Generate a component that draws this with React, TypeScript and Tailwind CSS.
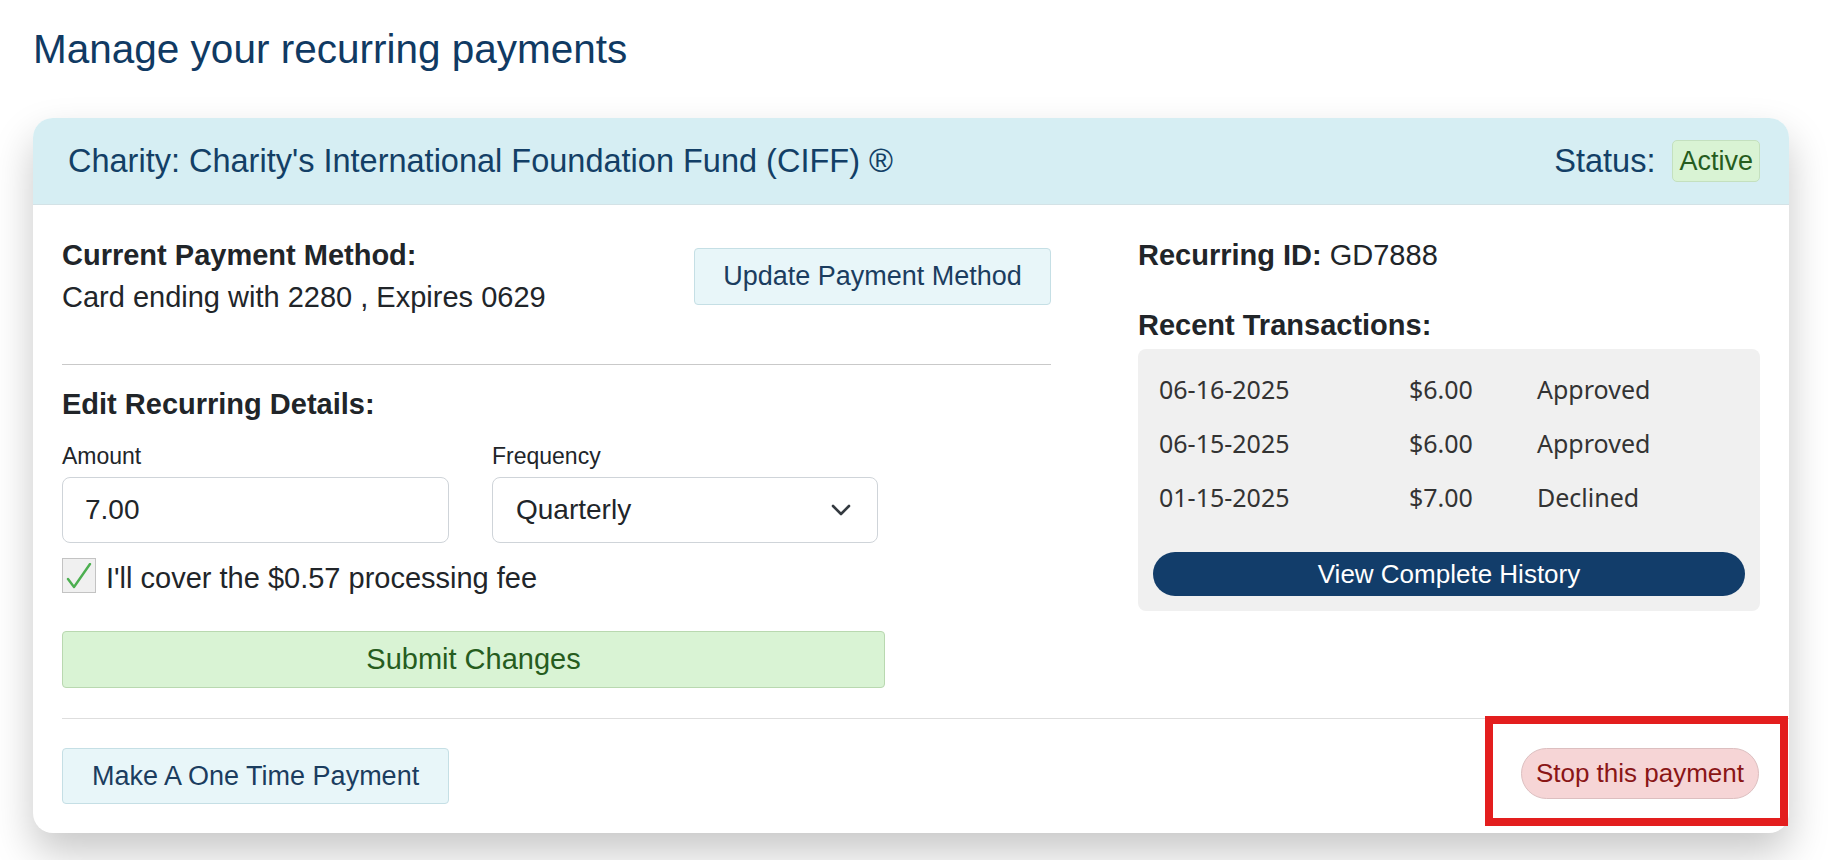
const transactions = [
  { date: "06-16-2025", amount: "$6.00", status: "Approved" },
  { date: "06-15-2025", amount: "$6.00", status: "Approved" },
  { date: "01-15-2025", amount: "$7.00", status: "Declined" },
]

const App = () => {
  return (
    <div className="min-h-screen bg-white pl-[33px] pt-[25px] font-['Liberation_Sans',Arial,sans-serif] text-[#212529]">
      <h1 className="text-[40.5px] leading-[48px] text-[#103a63]">Manage your recurring payments</h1>

      <div className="mt-[45px] w-[1756px] rounded-[20px] bg-white shadow-[0_20px_40px_rgba(0,0,0,0.22)]">
        {/* header */}
        <div className="flex h-[87px] items-center justify-between rounded-t-[20px] border-b border-[#d3e2e6] bg-[#d6eef3] pl-[35px] pr-[29px] text-[32.5px] leading-[38px] text-[#133f66]">
          <div>Charity: Charity's International Foundation Fund (CIFF) ®</div>
          <div className="flex items-center gap-[17px]">
            <span>Status:</span>
            <span className="rounded-[5px] border border-[#c4e0bf] bg-[#d9f3d4] px-[6px] text-[27px] leading-[40px] text-[#265c1e]">
              Active
            </span>
          </div>
        </div>

        {/* body */}
        <div className="flex gap-[87px] px-[29px] pb-[30px] pt-[29px]">
          <div className="w-[989px]">
            <div className="flex items-center justify-between">
              <div className="text-[29px] leading-[42px]">
                <div className="font-bold">Current Payment Method:</div>
                <div>Card ending with 2280 , Expires 0629</div>
              </div>
              <button className="h-[57px] w-[357px] rounded-[4px] border border-[#c5dfe5] bg-[#e8f6f9] text-[27px] text-[#1b3d5f]">
                Update Payment Method
              </button>
            </div>

            <div className="mt-[46px] h-px bg-[#c9c9c9]" />

            <div className="mt-[18px] text-[29px] font-bold leading-[42px]">Edit Recurring Details:</div>

            <div className="mt-[14px] flex gap-[43px]">
              <div className="w-[387px]">
                <div className="mb-[4px] text-[23px] leading-[34px]">Amount</div>
                <input
                  readOnly
                  value="7.00"
                  className="h-[66px] w-full rounded-[8px] border border-[#cfd4d9] bg-white pl-[22px] text-[28px] text-[#212529] outline-none"
                />
              </div>
              <div className="w-[386px]">
                <div className="mb-[4px] text-[23px] leading-[34px]">Frequency</div>
                <div className="flex h-[66px] items-center justify-between rounded-[8px] border border-[#cfd4d9] bg-white pl-[23px] pr-[26px] text-[28px]">
                  <span>Quarterly</span>
                  <svg width="20" height="12" viewBox="0 0 20 12" fill="none">
                    <path d="M2 2l8 8 8-8" stroke="#343a40" strokeWidth="2.6" strokeLinecap="round" strokeLinejoin="round" />
                  </svg>
                </div>
              </div>
            </div>

            <div className="mt-[15px] flex h-[35px] items-start gap-[10px]">
              <div className="flex h-[35px] w-[34px] items-center justify-center border border-[#c3c3c3] bg-[#f0f0f0]">
                <svg width="26" height="26" viewBox="0 0 26 26" fill="none">
                  <path d="M2 16l6 8L24 1" stroke="#4caf50" strokeWidth="2.4" strokeLinecap="round" strokeLinejoin="round" />
                </svg>
              </div>
              <span className="pt-[3px] text-[29px] leading-[35px]">I'll cover the $0.57 processing fee</span>
            </div>

            <button className="mt-[38px] h-[57px] w-[823px] rounded-[4px] border border-[#b9d8b0] bg-[#d9f3d4] text-[29px] text-[#265c1e]">
              Submit Changes
            </button>
          </div>

          <div className="flex-1">
            <div className="text-[29px] leading-[42px]">
              <span className="font-bold">Recurring ID:</span> GD7888
            </div>
            <div className="mt-[28px] text-[29px] font-bold leading-[42px]">Recent Transactions:</div>

            <div className="mt-[3px] rounded-[8px] bg-[#f0f0f0] px-[15px] pb-[15px] pt-[13px]">
              <div className="pl-[6px] font-['Noto_Sans','Open_Sans',sans-serif] text-[25px] text-[#333]">
                {transactions.map((t) => (
                  <div key={t.date} className="grid grid-cols-[250px_128px_1fr] leading-[54px]">
                    <span>{t.date}</span>
                    <span>{t.amount}</span>
                    <span>{t.status}</span>
                  </div>
                ))}
              </div>
              <button className="mt-[28px] h-[44px] w-full rounded-full bg-[#123d6a] text-[26px] text-white">
                View Complete History
              </button>
            </div>
          </div>
        </div>

        {/* footer */}
        <div className="ml-[29px] flex items-start justify-between border-t border-[#dedede] pb-[29px] pr-[30px] pt-[29px]">
          <button className="h-[56px] rounded-[4px] border border-[#c5dfe5] bg-[#e8f6f9] px-[29px] text-[27px] text-[#1b3d5f]">
            Make A One Time Payment
          </button>
          <div className="relative">
            <button className="h-[51px] rounded-full border border-[#dcbfc0] bg-[#f6d5d6] px-[14px] text-[26px] text-[#8a1616]">
              Stop this payment
            </button>
            <div className="pointer-events-none absolute -bottom-[27px] -left-[36px] -right-[29px] -top-[32px] border-[8px] border-[#e31e1e]" />
          </div>
        </div>
      </div>
    </div>
  )
}

export default App
